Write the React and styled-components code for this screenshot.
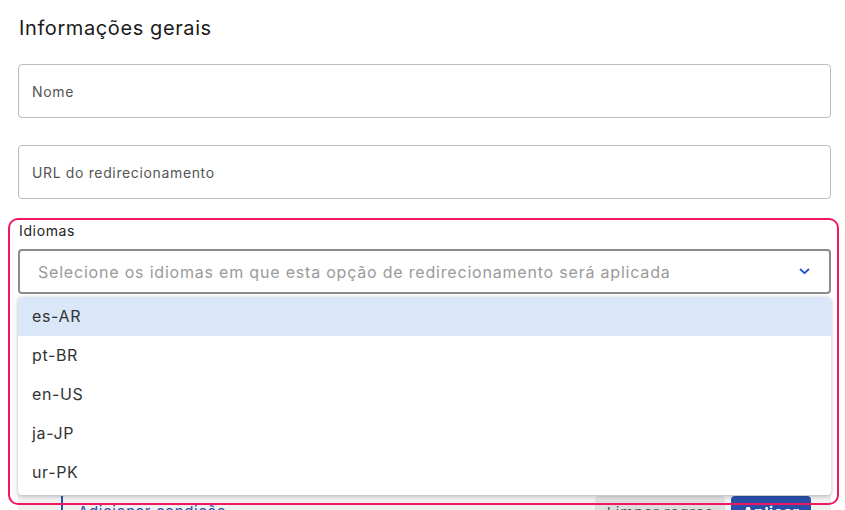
import React from 'react'
import styled, { createGlobalStyle } from 'styled-components'

const GlobalStyle = createGlobalStyle`
  body {
    margin: 0;
    background: #fff;
    font-family: Inter, "Noto Sans", sans-serif;
    letter-spacing: 0.04em;
    color: #1f1f1f;
  }
  * { box-sizing: border-box; }
`

const Page = styled.main`
  padding: 16px 14px 0 18px;
  height: 510px;
  overflow: hidden;
`

const Title = styled.h1`
  margin: 0 0 24px 1px;
  font-size: 20px;
  line-height: 24px;
  font-weight: 400;
  letter-spacing: 0.03em;
  color: #1a1a1a;
`

const TextInput = styled.div`
  height: 54px;
  border: 1px solid #bdbdbd;
  border-radius: 4px;
  display: flex;
  align-items: center;
  padding: 0 13px;
  font-size: 14px;
  color: #555;
  margin-bottom: ${({ gap }) => gap || 0}px;
`

const FieldGroup = styled.div`
  position: relative;
  margin-top: 23px;
`

const Highlight = styled.div`
  position: absolute;
  top: -4px;
  left: -10px;
  right: -8px;
  height: 287px;
  border: 2.5px solid #f0185e;
  border-radius: 10px;
  pointer-events: none;
  z-index: 3;
`

const Label = styled.label`
  display: block;
  margin-left: 1px;
  font-size: 14px;
  line-height: 18px;
  color: #222;
`

const SelectWrap = styled.div`
  position: relative;
  margin-top: 9px;
`

const Select = styled.div`
  height: 45px;
  border: 2px solid #8c8c8c;
  border-radius: 4px;
  display: flex;
  align-items: center;
  justify-content: space-between;
  padding: 0 19px 0 18px;
  font-size: 16px;
  letter-spacing: 0.05em;
  color: #9a9a9a;
  svg { flex: none; }
`

const Menu = styled.ul`
  position: absolute;
  top: calc(100% + 3px);
  left: 0;
  right: 0;
  margin: 0;
  padding: 0 0 4px;
  list-style: none;
  background: #fff;
  border-radius: 4px;
  box-shadow: 0 1px 4px rgba(0, 0, 0, 0.28);
  z-index: 2;
`

const Option = styled.li`
  height: 38.8px;
  display: flex;
  align-items: center;
  padding: 0 14px;
  font-size: 16px;
  color: #333;
  background: ${({ active }) => (active ? '#dae7f8' : '#fff')};
  border-radius: ${({ active }) => (active ? '4px 4px 0 0' : '0')};
`

const RulesPanel = styled.section`
  margin-top: 16px;
  background: #f0f0f0;
  border-radius: 4px;
  padding: 16px 20px 12px 43px;
`

const Conditions = styled.div`
  height: 160px;
  border-left: 2px solid #2a4fa8;
`

const Actions = styled.div`
  display: flex;
  align-items: center;
  gap: 6px;
  margin-top: 10px;
`

const AddLink = styled.a`
  flex: 1;
  border-left: 2px solid #2a4fa8;
  padding-left: 15px;
  font-size: 15px;
  color: #2a4fa8;
  line-height: 32px;
`

const Button = styled.button`
  height: 32px;
  border: none;
  border-radius: 4px;
  font-family: inherit;
  letter-spacing: inherit;
  font-size: 15px;
  font-weight: ${({ primary }) => (primary ? 700 : 400)};
  width: ${({ w }) => w}px;
  background: ${({ primary }) => (primary ? '#2a4fa8' : '#dedede')};
  color: ${({ primary }) => (primary ? '#fff' : '#555')};
`

const languages = ['es-AR', 'pt-BR', 'en-US', 'ja-JP', 'ur-PK']

export default function App() {
  return (
    <>
      <GlobalStyle />
      <Page>
        <Title>Informações gerais</Title>
        <TextInput gap={27}>Nome</TextInput>
        <TextInput>URL do redirecionamento</TextInput>
        <FieldGroup>
          <Highlight />
          <Label>Idiomas</Label>
          <SelectWrap>
            <Select>
              Selecione os idiomas em que esta opção de redirecionamento será aplicada
              <svg width="11" height="7" viewBox="0 0 11 7" fill="none">
                <path d="M1.5 1.5 L5.5 5.2 L9.5 1.5" stroke="#1d4fd8" strokeWidth="1.8" strokeLinecap="round" strokeLinejoin="round" />
              </svg>
            </Select>
            <Menu>
              {languages.map((lang, i) => (
                <Option key={lang} active={i === 0}>{lang}</Option>
              ))}
            </Menu>
          </SelectWrap>
        </FieldGroup>
        <RulesPanel>
          <Conditions />
          <Actions>
            <AddLink>Adicionar condição</AddLink>
            <Button w={130}>Limpar regras</Button>
            <Button primary w={80}>Aplicar</Button>
          </Actions>
        </RulesPanel>
      </Page>
    </>
  )
}
